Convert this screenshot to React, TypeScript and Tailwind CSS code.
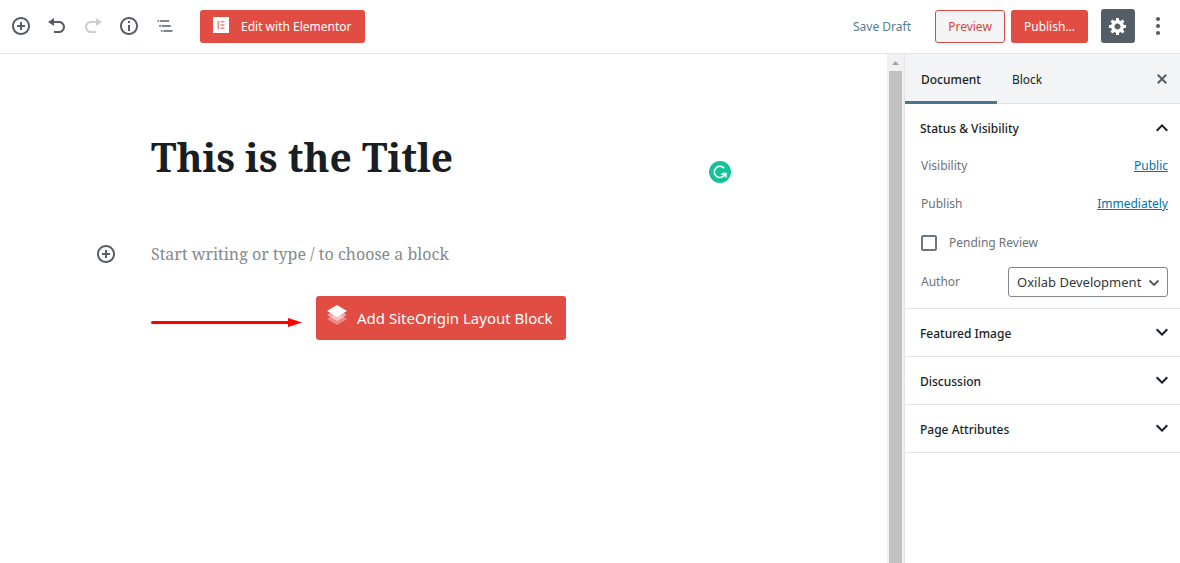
import React, { useState } from "react";

const CIRCLE_PLUS =
  "M10 1c-5 0-9 4-9 9s4 9 9 9 9-4 9-9-4-9-9-9zm0 16c-3.9 0-7-3.1-7-7s3.1-7 7-7 7 3.1 7 7-3.1 7-7 7zm1-11H9v3H6v2h3v3h2v-3h3V9h-3V6z";
const UNDO = "M12 5H7V2L1 6l6 4V7h5c2.2 0 4 1.8 4 4s-1.8 4-4 4H7v2h5c3.3 0 6-2.7 6-6s-2.7-6-6-6z";
const REDO = "M8 5h5V2l6 4-6 4V7H8c-2.2 0-4 1.8-4 4s1.8 4 4 4h5v2H8c-3.3 0-6-2.7-6-6s2.7-6 6-6z";
const INFO =
  "M10 1c-5 0-9 4-9 9s4 9 9 9 9-4 9-9-4-9-9-9zm0 16c-3.9 0-7-3.1-7-7s3.1-7 7-7 7 3.1 7 7-3.1 7-7 7zM9 5h2v2H9zM9 9h2v6H9z";
const OUTLINE =
  "M5 5H3v2h2V5zm3 8h11v-2H8v2zm9-8H6v2h11V5zM7 11H5v2h2v-2zm0 8h2v-2H7v2zm3-2v2h11v-2H10z";
const GEAR =
  "M18 12h-2.18c-.17.7-.44 1.35-.81 1.93l1.54 1.54-2.1 2.1-1.54-1.54c-.58.36-1.23.63-1.91.79V19H8v-2.18c-.68-.16-1.33-.43-1.91-.79l-1.54 1.54-2.12-2.12 1.54-1.54c-.36-.58-.63-1.23-.79-1.91H1V9.03h2.17c.16-.7.44-1.35.8-1.94L2.43 5.55l2.1-2.1 1.54 1.54c.58-.37 1.24-.64 1.93-.81V2h3v2.18c.68.16 1.33.43 1.91.79l1.54-1.54 2.12 2.12-1.54 1.54c.36.59.64 1.24.8 1.94H18V12zm-8.5 1.5c1.66 0 3-1.34 3-3s-1.34-3-3-3-3 1.34-3 3 1.34 3 3 3z";
const CLOSE =
  "M14.95 6.46L11.41 10l3.54 3.54-1.41 1.41L10 11.42l-3.53 3.53-1.42-1.42L8.58 10 5.05 6.47l1.42-1.42L10 8.58l3.54-3.53z";
const CHEVRON_DOWN = "M7.41 8.59L12 13.17l4.59-4.58L18 10l-6 6-6-6 1.41-1.41z";
const CHEVRON_UP = "M12 8l-6 6 1.41 1.41L12 10.83l4.59 4.58L18 14z";

function Icon({ path, box = 20, className = "size-5" }: { path: string; box?: number; className?: string }) {
  return (
    <svg viewBox={`0 0 ${box} ${box}`} className={`shrink-0 ${className}`} fill="currentColor" aria-hidden="true">
      <path d={path} />
    </svg>
  );
}

function ToolButton({ label, path, box, disabled }: { label: string; path: string; box?: number; disabled?: boolean }) {
  return (
    <button
      type="button"
      aria-label={label}
      disabled={disabled}
      className="flex size-9 items-center justify-center text-[#555d66] disabled:opacity-30"
    >
      <Icon path={path} box={box} />
    </button>
  );
}

function Header() {
  return (
    <header className="flex h-[54px] shrink-0 items-center justify-between border-b border-[#e2e4e7] pr-1 pb-px pl-[3px]">
      <div className="flex items-center">
        <ToolButton label="Add block" path={CIRCLE_PLUS} />
        <ToolButton label="Undo" path={UNDO} />
        <ToolButton label="Redo" path={REDO} disabled />
        <ToolButton label="Content structure" path={INFO} />
        <ToolButton label="Block navigation" path={OUTLINE} box={24} />
        <button
          type="button"
          className="ml-[17px] flex h-[33px] items-center gap-3 rounded-[3px] bg-[#e14d43] px-[13px] pt-0.5 text-[12px] text-white"
        >
          <svg viewBox="0 0 16 16" className="-mt-1 size-4" aria-hidden="true">
            <path fill="#fff" d="M0 0h16v16H0z" />
            <path fill="#e58a83" d="M4.5 4h1.6v8H4.5zM7.5 4h4v1.6h-4zM7.5 7.2h4v1.6h-4zM7.5 10.4h4V12h-4z" />
          </svg>
          Edit with Elementor
        </button>
      </div>
      <div className="flex items-center">
        <button type="button" className="mr-6 pt-0.5 text-[12px] text-[#4f7f92]">
          Save Draft
        </button>
        <button
          type="button"
          className="h-[33px] w-[70px] rounded-[3px] border border-[#d84a41] bg-[#f3f4f5] pt-0.5 text-[12px] text-[#d4453c]"
        >
          Preview
        </button>
        <button type="button" className="ml-1.5 h-[33px] w-[77px] rounded-[3px] bg-[#e14d43] pt-0.5 text-[12px] text-white">
          Publish...
        </button>
        <button
          type="button"
          aria-label="Settings"
          className="ml-[13px] flex size-[34px] items-center justify-center rounded-[3px] bg-[#555d66] text-white"
        >
          <Icon path={GEAR} />
        </button>
        <button type="button" aria-label="More options" className="ml-[5px] flex size-9 items-center justify-center text-[#555d66]">
          <svg viewBox="0 0 20 20" className="size-5" fill="currentColor" aria-hidden="true">
            <circle cx="10" cy="3" r="2.1" />
            <circle cx="10" cy="10" r="2.1" />
            <circle cx="10" cy="17" r="2.1" />
          </svg>
        </button>
      </div>
    </header>
  );
}

function Editor() {
  return (
    <main className="min-w-0 flex-1">
      <div className="mx-auto grid max-w-[695px] grid-cols-[55px_minmax(0,1fr)_55px] pt-[70px]">
        <div className="col-start-2 flex items-end pr-[5px]">
          <input
            aria-label="Title"
            defaultValue="This is the Title"
            className="h-16 min-w-0 flex-1 bg-transparent font-['Noto_Serif','Droid_Serif','Liberation_Serif',serif] text-[39px] font-bold text-[#191e23] outline-none"
          />
          <svg viewBox="0 0 22 22" className="mb-[5px] size-[22px] shrink-0" role="img" aria-label="Grammarly">
            <circle cx="11" cy="11" r="11" fill="#15c39a" />
            <path d="M15.2 7.3A5.6 5.6 0 1 0 16 13.2H12.3" fill="none" stroke="#fff" strokeWidth="1.6" />
            <path d="M13 12.4h4v4" fill="none" stroke="#fff" strokeWidth="1.4" />
          </svg>
        </div>
        <button type="button" aria-label="Add block" className="col-start-1 mt-12 flex h-9 items-center text-[#555d66]">
          <Icon path={CIRCLE_PLUS} />
        </button>
        <input
          aria-label="Empty block"
          placeholder="Start writing or type / to choose a block"
          className="mt-12 h-9 min-w-0 bg-transparent font-['Noto_Serif','Droid_Serif','Liberation_Serif',serif] text-[16px] text-[#191e23] outline-none placeholder:text-[#86898c]"
        />
        <div className="col-start-2 mt-6 flex items-center gap-[14px]">
          <svg viewBox="0 0 151 10" className="mt-2 h-[10px] w-[151px]" aria-hidden="true">
            <path d="M1.5 5.5H138" stroke="#f00" strokeWidth="3" strokeLinecap="round" />
            <path d="M137 1L151 5.5l-14 4.5z" fill="#f00" />
          </svg>
          <button
            type="button"
            className="flex h-11 items-center gap-[9px] rounded-[3px] bg-[#e14d43] pr-3.5 pl-2.5 text-[15px] text-white"
          >
            <svg viewBox="0 0 22 22" className="-mt-1.5 size-[22px]" fill="#fff" aria-hidden="true">
              <path opacity=".35" d="M1 15L11 9l10 6-10 6z" />
              <path opacity=".5" d="M1 11L11 5l10 6-10 6z" />
              <path d="M1 7L11 1l10 6-10 6z" />
            </svg>
            Add SiteOrigin Layout Block
          </button>
        </div>
      </div>
    </main>
  );
}

function ScrollTrack() {
  return (
    <div className="flex w-[17px] shrink-0 flex-col items-center bg-[#f1f1f1]" aria-hidden="true">
      <svg viewBox="0 0 17 17" className="size-[17px]">
        <path d="M5 11l3.5-4 3.5 4z" fill="#a3a3a3" />
      </svg>
      <div className="w-[13px] flex-1 bg-[#c1c1c1]" />
    </div>
  );
}

function PanelHeading({ title, open, onToggle }: { title: string; open: boolean; onToggle: () => void }) {
  return (
    <h2>
      <button
        type="button"
        aria-expanded={open}
        onClick={onToggle}
        className="flex h-[47px] w-full items-center justify-between pt-0.5 pr-1.5 pl-[15px] text-[12px] font-medium text-[#191e23]"
      >
        {title}
        <Icon path={open ? CHEVRON_UP : CHEVRON_DOWN} box={24} className={open ? "-mt-0.5 size-6" : "-mt-1 size-6"} />
      </button>
    </h2>
  );
}

function CollapsedPanel({ title }: { title: string }) {
  const [open, setOpen] = useState(false);
  return (
    <section className="border-b border-[#e2e4e7]">
      <PanelHeading title={title} open={open} onToggle={() => setOpen(!open)} />
    </section>
  );
}

function StatusPanel() {
  const [open, setOpen] = useState(true);
  return (
    <section className="border-b border-[#e2e4e7]">
      <PanelHeading title="Status &amp; Visibility" open={open} onToggle={() => setOpen(!open)} />
      {open && (
        <div className="pt-0.5 pr-3 pb-[11px] pl-4 text-[12px] text-[#6c7279]">
          <div className="flex h-[26px] items-center justify-between">
            Visibility
            <a href="#visibility" className="text-[#0073aa] underline">
              Public
            </a>
          </div>
          <div className="mt-3 flex h-[26px] items-center justify-between">
            Publish
            <a href="#publish" className="text-[#0073aa] underline">
              Immediately
            </a>
          </div>
          <label className="mt-3 flex h-7 items-center gap-3">
            <input type="checkbox" className="size-4 appearance-none rounded-[2px] border-2 border-[#6c7781] bg-white" />
            Pending Review
          </label>
          <div className="mt-2.5 flex items-center justify-between">
            <label htmlFor="author">Author</label>
            <div className="relative">
              <select
                id="author"
                className="block h-[30px] w-40 appearance-none rounded-[3px] border border-[#7e8993] bg-white pt-0.5 pl-2 text-[13px] text-[#32373c]"
              >
                <option>Oxilab Development</option>
              </select>
              <svg viewBox="0 0 12 8" className="pointer-events-none absolute top-3 right-2 h-2 w-3" aria-hidden="true">
                <path d="M1.5 1.5L6 6l4.5-4.5" fill="none" stroke="#555" strokeWidth="1.8" />
              </svg>
            </div>
          </div>
        </div>
      )}
    </section>
  );
}

function Sidebar() {
  return (
    <aside className="w-[276px] shrink-0 border-l border-[#e2e4e7]">
      <div className="flex h-[50px] items-stretch border-b border-[#e2e4e7] bg-[#f3f4f5] text-[12px] text-[#191e23]">
        <button type="button" className="-mb-px border-b-[3px] border-[#43798a] px-4 pt-1 font-medium">
          Document
        </button>
        <button type="button" className="px-[15px] pt-0.5">
          Block
        </button>
        <button type="button" aria-label="Close settings" className="mr-2 ml-auto text-[#555d66]">
          <Icon path={CLOSE} />
        </button>
      </div>
      <StatusPanel />
      <CollapsedPanel title="Featured Image" />
      <CollapsedPanel title="Discussion" />
      <CollapsedPanel title="Page Attributes" />
    </aside>
  );
}

export default function App() {
  return (
    <div className="flex min-h-screen flex-col bg-white font-['Segoe_UI','Noto_Sans','Open_Sans',sans-serif]">
      <Header />
      <div className="flex flex-1">
        <Editor />
        <ScrollTrack />
        <Sidebar />
      </div>
    </div>
  );
}
